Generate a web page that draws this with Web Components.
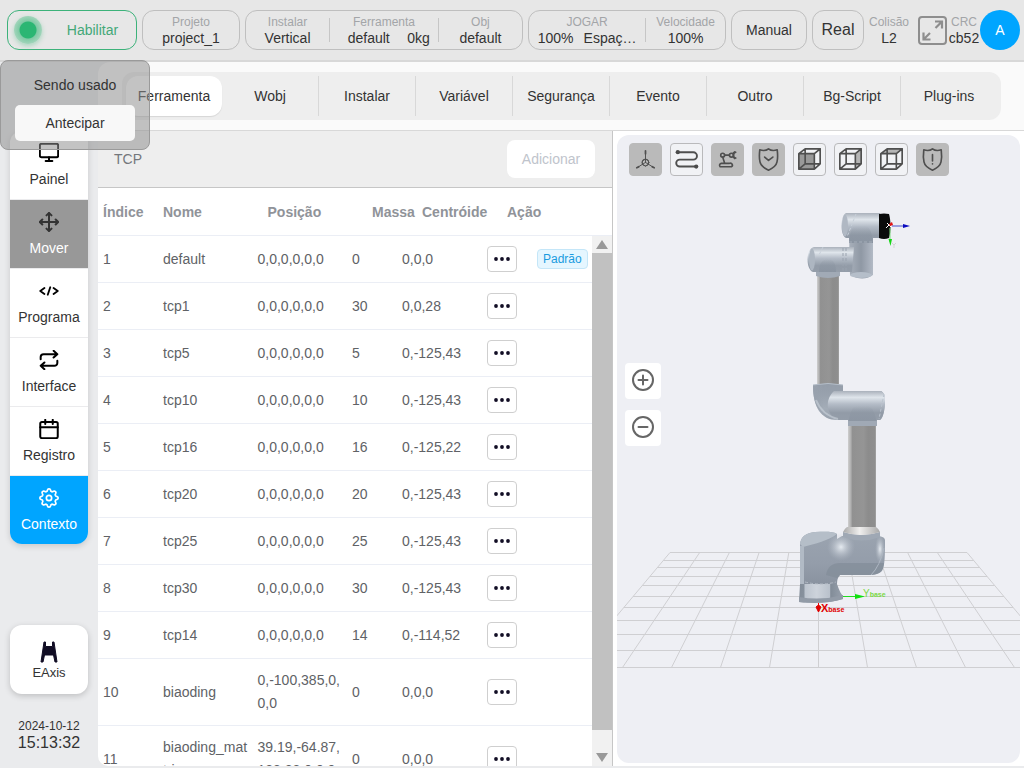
<!DOCTYPE html>
<html lang="pt">
<head>
<meta charset="utf-8">
<meta name="viewport" content="width=device-width, initial-scale=1">
<title>Contexto - Ferramenta</title>
<style>
  html, body { margin: 0; height: 100%; }
  body { font: 14px/16px "Liberation Sans", Arial, sans-serif; color: #333; background: #eaebed; }
</style>
</head>
<body>
<robot-app></robot-app>

<script>
const BASE = `*, *::before, *::after { box-sizing: border-box; }
button { font: inherit; color: inherit; margin: 0; padding: 0; border: 0; background: none; cursor: pointer; }
a { color: inherit; text-decoration: none; }
svg { display: block; }`;

function define(name, css, html) {
  customElements.define(name, class extends HTMLElement {
    constructor() {
      super();
      this.attachShadow({ mode: "open" });
    }
    connectedCallback() {
      if (this.shadowRoot.childNodes.length) return;
      const t = document.createElement("template");
      t.innerHTML = `<style>${BASE}${css}</style>${typeof html === "function" ? html(this) : html}`;
      this.shadowRoot.append(t.content.cloneNode(true));
    }
  });
}

const stroke = (body, w = 2, size = 24) =>
  `<svg width="${size}" height="${size}" viewBox="0 0 24 24" fill="none" stroke="currentColor" stroke-width="${w}" stroke-linecap="round" stroke-linejoin="round" aria-hidden="true">${body}</svg>`;

const CUBE = `<path d="M5 10h16v16H5zM11.500 5H27v15.500H11.500zM5 10l6.500-5M21 10l6-5M21 26l6-5.500M5 26l6.500-5.500"/>`;
const SHIELD = `<path d="M16 5c-2.500 2-6 2-9 1-.6 5-.6 9 .2 12.500C8 22.500 11.500 25 16 27c4.500-2 8-4.500 8.800-8.500.8-3.500.8-7.500.2-12.500-3 1-6.500 1-9-1z"/>`;
const view = (body) =>
  `<svg width="31" height="31" viewBox="0 0 32 32" fill="none" stroke="#4f4f4f" stroke-width="1.700" stroke-linecap="round" stroke-linejoin="round" aria-hidden="true">${body}</svg>`;

/* Eight-lobed gear outline around (12, 12). */
function gear() {
  const pts = [];
  for (let i = 0; i < 64; i++) {
    const a = i / 64 * 2 * Math.PI, r = 9.600 + 1.300 * Math.tanh(2.500 * Math.cos(8 * a));
    pts.push(`${(12 + r * Math.sin(a)).toFixed(2)} ${(12 - r * Math.cos(a)).toFixed(2)}`);
  }
  return `<path d="M${pts.join("L")}z"/>`;
}

const ICONS = {
  monitor: stroke(`<rect x="1" y="1" width="22" height="16" rx="2"/><path d="M12 17v4M8 21.500h8"/>`, 2.400, 20),
  move: stroke(`<path d="M4 9l-3 3 3 3M9 4l3-3 3 3M15 20l-3 3-3-3M20 9l3 3-3 3M1 12h22M12 1v22"/>`, 2.400, 20),
  code: stroke(`<path d="M6.500 8.500L1.500 12l5 3.500M17.500 8.500l5 3.500-5 3.500M13.500 7.500l-3 9"/>`, 2.200, 20),
  repeat: stroke(`<path d="M17.500 1l4.500 4-4.500 4M2 11V8.500A3.500 3.500 0 0 1 5.500 5H22M6.500 23L2 19l4.500-4M22 13v2.500a3.500 3.500 0 0 1-3.500 3.500H2"/>`, 2.400, 20),
  calendar: stroke(`<rect x="1.500" y="3.500" width="21" height="19.500" rx="2"/><path d="M7.500 1v5M16.500 1v5M1.500 10h21"/>`, 2.400, 20),
  gear: stroke(`<circle cx="12" cy="12" r="3.200"/>${gear()}`, 2, 20),
  axes: view(`<g stroke-width="1"><circle cx="16" cy="19" r="3.500"/><path d="M16 8v11M16 19l-8 5M16 19l8 5M13 17.500l3-2 3 2V21l-3 2-3-2z"/></g><path d="M16 7v3M7 24.500l2-1M25 24.500l-2-1" stroke-width="1.800"/>`),
  path: view(`<g stroke-width="2"><path d="M8 8.500h15a3.800 3.800 0 0 1 0 7.600H9a3.600 3.600 0 0 0 0 7.200h16"/></g><circle cx="7" cy="8.500" r="2.200" fill="#4a4a4a" stroke="none"/><circle cx="26" cy="23.300" r="2.200" fill="#4a4a4a" stroke="none"/>`),
  arm: view(`<g stroke-width="1.700"><path d="M9.500 20h8.500a2 2 0 0 1 2 3.500H8.500a2 2 0 0 1 1-3.500zM13 19.500L11 13.500M13 11.500h5"/><circle cx="11" cy="11.500" r="2"/><circle cx="20" cy="11.500" r="2"/><path d="M24.500 8.500c-3 .5-3 5.500 0 6M22 9.500l1.500-1.500M22 13.500l1.500 1.500"/></g>`),
  shieldCheck: view(SHIELD + `<path d="M12 13.500l4 3.500 4.500-3.500"/>`),
  shieldAlert: view(SHIELD + `<path d="M16 11v6.500M16 20.500v.1"/>`),
  cubeFront: view(`<path d="M5 10h16v16H5z" fill="#999" stroke="none"/>` + CUBE),
  cubeSide: view(`<path d="M21 10l6-5v15.500L21 26z" fill="#b5b5b5" stroke="none"/>` + CUBE),
  cubeTop: view(`<path d="M5 10l6.500-5H27l-6 5z" fill="#b5b5b5" stroke="none"/>` + CUBE)
};

define("stat-field", `
  :host { display: flex; flex-direction: column; align-items: center; justify-content: center; min-width: 0; white-space: nowrap; }
  .label { font-size: 12px; line-height: 15px; color: #a3a5a8; }
  .value { display: flex; align-self: stretch; justify-content: center; font-size: 14px; line-height: 16px; color: #333; }`,
  el => `<span class="label">${el.getAttribute("label")}</span><span class="value"><slot></slot></span>`);

define("app-header", `
  :host { display: flex; align-items: center; gap: 5px; height: 62px; padding: 0 4px 0 7px; background: #e7e7e7; border-bottom: 2px solid #d8d8d8; }
  .box { height: 40px; border: 1px solid #bfbfbf; border-radius: 12px; display: flex; align-items: stretch; justify-content: center; }
  button.box { align-items: center; }
  .enable { flex: 1 0 130px; border-color: #3cb27a; color: #43a878; justify-content: flex-start; padding-left: 6px; }
  .enable span { flex: 1; text-align: center; padding-left: 7px; }
  .lamp { width: 28px; height: 28px; border-radius: 50%; background: radial-gradient(circle, #2bb673 0 8px, #7fcaa5 9px, #a2d5bb 14px); box-shadow: 0 2px 5px #a9d6bf; }
  .project { flex: 1 0 98px; }
  .setup { flex: 2 0 278px; }
  .jog { flex: 1 0 198px; }
  .manual { flex: 0 0 76px; }
  .real { flex: 0 0 52px; font-size: 16px; }
  stat-field { flex: 1 1 84px; }
  .setup .tool { flex: 1 1 109px; }
  .jog .mode { flex: 1 1 118px; }
  .jog .speed { flex: 1 1 80px; }
  .rule { width: 1px; height: 24px; margin: 7px 0; background: #c6c6c6; }
  .half { flex: 1; text-align: center; }
  .load { padding-right: 8px; }
  .pair { display: flex; gap: 10px; }
  .tail { display: flex; align-items: center; }
  .tail stat-field { flex: 0 0 32px; }
  .collision { flex: 0 0 40px; }
  .full { width: 34px; height: 40px; display: grid; place-items: center; padding-left: 2px; }
  .user { width: 40px; height: 40px; border-radius: 50%; background: #00a5ff; color: #fff; font-size: 14px; }`,
  `<button class="box enable" type="button"><i class="lamp"></i><span>Habilitar</span></button>
   <div class="box project"><stat-field label="Projeto">project_1</stat-field></div>
   <div class="box setup">
     <stat-field label="Instalar">Vertical</stat-field><i class="rule"></i>
     <stat-field class="tool" label="Ferramenta"><span class="half">default</span><span class="load">0kg</span></stat-field><i class="rule"></i>
     <stat-field label="Obj">default</stat-field>
   </div>
   <div class="box jog">
     <stat-field class="mode" label="JOGAR"><span class="pair"><span>100%</span><span>Espaç…</span></span></stat-field><i class="rule"></i>
     <stat-field class="speed" label="Velocidade">100%</stat-field>
   </div>
   <button class="box manual" type="button">Manual</button>
   <button class="box real" type="button">Real</button>
   <stat-field class="collision" label="Colisão">L2</stat-field>
   <div class="tail">
     <button class="full" type="button" aria-label="Tela cheia"><svg width="29" height="29" viewBox="0 0 29 29" fill="none" stroke="#8e8e8e" stroke-width="2"><rect x="1" y="1" width="27" height="27" rx="3"/><path d="M17 5.500h7v7M24 5.500l-6.500 6.500M5.500 16.500v7h7M5.500 23.500l6.500-6.500" stroke-width="2.200"/></svg></button>
     <stat-field label="CRC">cb52</stat-field>
     <button class="user" type="button">A</button>
   </div>`);

define("nav-item", `
  :host { display: block; border-bottom: 1px solid #ebebed; }
  :host(:last-of-type) { border-bottom: 0; }
  a { display: flex; flex-direction: column; align-items: center; gap: 8px; height: 68px; padding-top: 12px; background: #fff; color: #000; }
  span { line-height: 16px; color: #333; }
  :host([state="used"]) a { background: #989898; color: #333; }
  :host([state="used"]) span { color: #fff; }
  :host([state="active"]) a { background: #00a5ff; color: #fff; }
  :host([state="active"]) span { color: #fff; }`,
  el => `<a href="#">${ICONS[el.getAttribute("icon")]}<span><slot></slot></span></a>`);

define("side-bar", `
  :host { display: flex; flex-direction: column; width: 98px; flex: none; padding: 69px 10px 16px; }
  nav { border-radius: 12px; overflow: hidden; box-shadow: 0 2px 6px #00000026; flex: none; }
  .axis { display: flex; flex-direction: column; align-items: center; justify-content: center; gap: 2px; height: 69px; margin-top: auto; padding-top: 2px; background: #fff; border-radius: 12px; box-shadow: 0 2px 6px #00000030; font-size: 13px; }
  time { display: flex; flex-direction: column; align-items: center; margin-top: 25px; font-size: 12px; line-height: 15px; }
  .clock { font-size: 16px; line-height: 18px; }`,
  `<nav>
     <nav-item icon="monitor">Painel</nav-item>
     <nav-item icon="move" state="used">Mover</nav-item>
     <nav-item icon="code">Programa</nav-item>
     <nav-item icon="repeat">Interface</nav-item>
     <nav-item icon="calendar">Registro</nav-item>
     <nav-item icon="gear" state="active">Contexto</nav-item>
   </nav>
   <button class="axis" type="button"><svg width="18" height="22" viewBox="0 0 18 22" aria-hidden="true"><path d="M4 1h1.500v4.500h7V1H14l3 20h-2l-1.500-7h-9L3 21H1z" fill="#110d24" stroke="#110d24" stroke-linejoin="round"/></svg><span>EAxis</span></button>
   <time datetime="2024-10-12T15:13:32"><span>2024-10-12</span><span class="clock">15:13:32</span></time>`);

define("tab-bar", `
  :host { display: block; padding: 10px 23px 10px 24px; background: #fafafa; border-bottom: 1px solid #d8d8d8; border-radius: 12px 0 0 0; }
  div { display: flex; height: 48px; padding: 4px; background: #eee; border-radius: 12px; }
  button { flex: 1 1 0; border-right: 1px solid #d8d8d8; }
  button:last-child { border-right: 0; }
  button[aria-selected="true"] { background: #fff; border-right: 0; border-radius: 12px; box-shadow: 0 1px 1px #0000001a; }`,
  `<div role="tablist">${["Ferramenta", "Wobj", "Instalar", "Variável", "Segurança", "Evento", "Outro", "Bg-Script", "Plug-ins"]
    .map((t, i) => `<button type="button" role="tab" aria-selected="${i === 0}">${t}</button>`).join("")}</div>`);

const TOOLS = [
  ["default", "0,0,0,0,0,0", 0, "0,0,0", true],
  ["tcp1", "0,0,0,0,0,0", 30, "0,0,28"],
  ["tcp5", "0,0,0,0,0,0", 5, "0,-125,43"],
  ["tcp10", "0,0,0,0,0,0", 10, "0,-125,43"],
  ["tcp16", "0,0,0,0,0,0", 16, "0,-125,22"],
  ["tcp20", "0,0,0,0,0,0", 20, "0,-125,43"],
  ["tcp25", "0,0,0,0,0,0", 25, "0,-125,43"],
  ["tcp30", "0,0,0,0,0,0", 30, "0,-125,43"],
  ["tcp14", "0,0,0,0,0,0", 14, "0,-114,52"],
  ["biaoding", "0,-100,385,0,<wbr>0,0", 0, "0,0,0"],
  ["biaoding_mat<wbr>trix", "39.19,-64.87,<wbr>123.23,0,0,0", 0, "0,0,0"]
];
const COLS = `<colgroup><col class="n"><col><col><col class="m"><col class="c"><col class="a"></colgroup>`;

define("tcp-table", `
  :host { display: flex; flex-direction: column; min-height: 0; flex: 1; background: #fff; color: #606266; }
  table { width: 100%; border-collapse: separate; border-spacing: 0; table-layout: fixed; line-height: 23px; }
  .n { width: 60px; } .m { width: 50px; } .c { width: 85px; } .a { width: 110px; }
  th, td { text-align: left; padding: 10px 5px; border-bottom: 1px solid #ebeef5; vertical-align: middle; overflow-wrap: anywhere; }
  th { height: 48px; padding: 2px 5px 0; color: #909399; font-weight: bold; white-space: nowrap; }
  .body { display: flex; flex: 1; min-height: 0; }
  .rows { flex: 1; min-width: 0; overflow-y: auto; scrollbar-width: none; }
  .rows::-webkit-scrollbar { display: none; }
  .cell { display: flex; align-items: center; gap: 20px; white-space: nowrap; }
  .more { width: 30px; height: 26px; flex: none; display: grid; place-items: center; border: 1px solid #cfcfcf; border-radius: 4px; background: #fff; }
  .tag { height: 20px; flex: none; padding: 0 5px; border: 1px solid #c4e6f8; border-radius: 4px; background: #e5f6ff; color: #1a9be0; font-size: 12px; line-height: 18px; }
  .bar { width: 20px; flex: none; display: flex; flex-direction: column; background: #f1f1f1; }
  .bar button { height: 17px; flex: none; display: grid; place-items: center; }
  .thumb { flex: 0 1 90%; background: #c1c1c1; margin-bottom: auto; }`,
  () => `<table>${COLS}<thead><tr><th>Índice</th><th>Nome</th><th>Posição</th><th>Massa</th><th>Centróide</th><th>Ação</th></tr></thead></table>
  <div class="body"><div class="rows"><table>${COLS}<tbody>${TOOLS.map(([name, pos, mass, center, std], i) =>
    `<tr><td>${i + 1}</td><td>${name}</td><td>${pos}</td><td>${mass}</td><td>${center}</td><td><div class="cell"><button class="more" type="button" aria-label="Mais"><svg width="16" height="4" viewBox="0 0 16 4" fill="#110d24"><circle cx="2" cy="2" r="1.900"/><circle cx="8" cy="2" r="1.900"/><circle cx="14" cy="2" r="1.900"/></svg></button>${std ? `<span class="tag">Padrão</span>` : ""}</div></td></tr>`).join("")}</tbody></table></div>
  <div class="bar"><button type="button" aria-label="Rolar para cima"><svg width="12" height="9" viewBox="0 0 12 9"><path d="M6 0l6 9H0z" fill="#999"/></svg></button><i class="thumb"></i><button type="button" aria-label="Rolar para baixo"><svg width="12" height="9" viewBox="0 0 12 9"><path d="M6 9l6-9H0z" fill="#999"/></svg></button></div></div>`);

define("tcp-panel", `
  :host { display: flex; flex-direction: column; min-width: 0; min-height: 0; border-right: 1px solid #c6c6c6; border-radius: 0 0 0 10px; overflow: hidden; }
  header { display: flex; align-items: center; justify-content: space-between; height: 57px; flex: none; padding: 0 17px 0 16px; background: #eee; border-bottom: 1px solid #c6c6c6; color: #74777c; }
  button { width: 88px; height: 38px; border-radius: 8px; background: #fff; color: #c0c4cc; }`,
  `<header><span>TCP</span><button type="button" disabled>Adicionar</button></header><tcp-table></tcp-table>`);

define("view-button", `
  :host { display: block; }
  button { width: 33px; height: 33px; display: grid; place-items: center; border: 1px solid #b9b9bb; border-radius: 4px; background: #f1f2f5; }
  :host([on]) button { background: #bababa; border-color: #bababa; }`,
  el => `<button type="button" aria-label="${el.getAttribute("label")}">${ICONS[el.getAttribute("icon")]}</button>`);

/* Floor grid in perspective: lines converge upward from y 667 to y 552. */
function floor() {
  const rows = [560, 567, 576, 585, 596, 607, 620, 634, 650];
  let d = "";
  [552, ...rows, 667].forEach(y => {
    const k = (y + .5 - 552.5) / 115, half = 148.500 + k * 96.500;
    d += `M${818.500 - half} ${y + .5}H${818.500 + half}`;
  });
  for (let i = -5; i <= 5; i++) d += `M${818.500 + i * 29.700} 552.500L${818.500 + i * 49} 667.500`;
  return d;
}

define("robot-scene", `
  :host { display: block; min-height: 0; min-width: 0; overflow: hidden; }
  svg { width: 100%; height: 100%; }
  text { font-family: "Liberation Sans", Arial, sans-serif; font-weight: bold; font-size: 11px; }
  .green { font-weight: normal; font-size: 10px; }
  .sub { font-size: 7px; font-weight: bold; }`,
  () => `<svg viewBox="617 135 403 628" preserveAspectRatio="xMidYMid slice" role="img" aria-label="Robô">
   <defs>
     <linearGradient id="h" x1="0" y1="0" x2="0" y2="1"><stop offset="0" stop-color="#aab1bb"/><stop offset=".22" stop-color="#dfe5eb"/><stop offset=".45" stop-color="#b4bcc7"/><stop offset=".75" stop-color="#929ba7"/><stop offset="1" stop-color="#949da9"/></linearGradient>
     <linearGradient id="v" x1="0" y1="0" x2="1" y2="0"><stop offset="0" stop-color="#a8b0bb"/><stop offset=".5" stop-color="#8f98a4"/><stop offset=".8" stop-color="#a4acb8"/><stop offset="1" stop-color="#b2bac5"/></linearGradient>
     <linearGradient id="t" x1="0" y1="0" x2="1" y2="0"><stop offset="0" stop-color="#cfcfcf"/><stop offset=".1" stop-color="#b0b0b0"/><stop offset=".16" stop-color="#919191"/><stop offset=".55" stop-color="#959595"/><stop offset=".72" stop-color="#8c8c8c"/><stop offset=".95" stop-color="#8e8e8e"/><stop offset="1" stop-color="#a5a5a5"/></linearGradient>
     <linearGradient id="r" x1="0" y1="0" x2="1" y2="0"><stop offset="0" stop-color="#aaa"/><stop offset=".45" stop-color="#f0efee"/><stop offset="1" stop-color="#a8a8a8"/></linearGradient>
     <linearGradient id="f" x1="0" y1="0" x2="1" y2="0"><stop offset="0" stop-color="#838d99"/><stop offset=".12" stop-color="#87919d"/><stop offset=".13" stop-color="#bcc4ce"/><stop offset=".4" stop-color="#cdd3db"/><stop offset=".7" stop-color="#b9c1cb"/><stop offset=".72" stop-color="#828c98"/><stop offset="1" stop-color="#98a1ad"/></linearGradient>
     <linearGradient id="e" x1="0" y1="0" x2="0" y2="1"><stop offset="0" stop-color="#949da9"/><stop offset=".25" stop-color="#98a1ad"/><stop offset=".6" stop-color="#a3acb7"/><stop offset="1" stop-color="#949da9"/></linearGradient>
     <linearGradient id="n" x1="0" y1="0" x2="0" y2="1"><stop offset="0" stop-color="#8a94a1" stop-opacity="0"/><stop offset="1" stop-color="#8a94a1"/></linearGradient>
     <linearGradient id="b" x1="0" y1="0" x2="0" y2="1"><stop offset="0" stop-color="#9ba4b0"/><stop offset=".6" stop-color="#949daa"/><stop offset="1" stop-color="#8a93a0"/></linearGradient>
     <linearGradient id="d" x1="0" y1="0" x2="1" y2="0"><stop offset="0" stop-color="#98a1ad"/><stop offset=".35" stop-color="#98a1ad" stop-opacity="0"/></linearGradient>
     <radialGradient id="s"><stop offset="0" stop-color="#eef3f8" stop-opacity=".9"/><stop offset="1" stop-color="#b4bcc7" stop-opacity="0"/></radialGradient>
   </defs>
   <path d="${floor()}" fill="none" stroke="#cfcfd2"/>
   <!-- forearm -->
   <path d="M817 274h22v112h-22z" fill="url(#t)"/>
   <path d="M816 268h24v8q-12 4-24 0z" fill="#a1aab6"/>
   <path d="M849 232h24v43q-10 7-23 0z" fill="url(#v)"/>
   <path d="M814 247h40l-2 25h-39c-7-2-8-23 1-25z" fill="url(#h)"/>
   <path d="M819 272c0-8 3-13 9-13s8 6 8 13z" fill="url(#n)"/>
   <ellipse cx="812" cy="259.500" rx="3" ry="11" fill="#adb6c1"/>
   <path d="M843 248v24M846 248v24" stroke="#9aa3af" stroke-dasharray="3 2" fill="none"/>
   <ellipse cx="861" cy="275" rx="11" ry="3" fill="#b5bec9"/>
   <!-- wrist -->
   <path d="M846 213h34v25h-7v5h-24v-5h-3c-6-3-6-22 0-25z" fill="url(#h)"/>
   <path d="M849 243q1-15 6-17h11q6 2 7 17z" fill="url(#n)"/>
   <ellipse cx="845" cy="225.500" rx="3" ry="11" fill="#b0b8c3"/>
   <path d="M856 214l-9 23M823 247l-4 8" stroke="#c6ced8" stroke-dasharray="3 2" fill="none"/>
   <path d="M849 242h24" stroke="#a3acb8" stroke-dasharray="3 2"/>
   <path d="M879 214q5-1 10 0c2 7 2 18 0 24q-5 2-10 0z" fill="#0b0b0b"/>
   <path d="M892 226h12" stroke="#4450c8"/><path d="M903 224l7 2-7 2z" fill="#0b0bbf"/>
   <path d="M890 228v14" stroke="#7edc7e"/><path d="M888.500 239h3.500l-1.500 7z" fill="#16d616"/>
   <path d="M887 223l4 4M891 223l-5 5" stroke="#fff"/><path d="M889 224l3-2 1 3-3 1z" fill="#e11212"/>
   <path d="M892 243l2 2 2-2M894 245v3" stroke="#d4d4d6" fill="none"/>
   <!-- elbow -->
   <path d="M813 385q15-3 30 0v6h38q4 2 4 9c0 10-2 18-5 20h-3v5h-29v-5h-11c-16 0-24-13-24-35z" fill="url(#e)"/>
   <path d="M834 391h47q4 2 4 9c0 10-2 18-5 20h-40c-14-3-16-20-6-29z" fill="url(#h)"/>
   <path d="M813 386h30v6c-8 4-10 14-2 28h-4c-16 0-24-13-24-34z" fill="url(#d)"/>
   <path d="M816 400q6 15 22 19" stroke="#d3dbe3" stroke-width="2" fill="none" opacity=".5"/>
   <path d="M848 425q2-17 8-19h12q7 2 9 19z" fill="url(#n)"/>
   <path d="M884 394l-5 25" stroke="#bac3cd" stroke-dasharray="3 2"/>
   <path d="M813 385q15-3 30 0" stroke="#b5bec9" fill="none"/>
   <!-- upper arm -->
   <path d="M848 426h28v103h-28z" fill="url(#t)"/>
   <path d="M848 421h29v5h-29z" fill="#a0a9b5"/>
   <!-- shoulder -->
   <path d="M800 544c1-8 6-11 15-12 9 0 17-1 22 2v5l5-3h37q6 1 6 4c0 14 0 26-3 31-4 4-9 4-16 4h-26q-3 3-3 9h-37z" fill="url(#b)"/>
   <path d="M800 544c1-8 6-11 15-12 9 0 17-1 22 2-8 6-22 10-34 13z" fill="#b5bec8"/>
   <path d="M800 546h4v40h-4z" fill="#b1bac5"/>
   <path d="M826 575q2-12 14-12h44c-1 9-4 12-18 12h-26l-3 3z" fill="#838d99" opacity=".75"/>
   <circle cx="841" cy="547" r="14" fill="url(#s)"/>
   <ellipse cx="880" cy="549" rx="5" ry="14" fill="url(#s)"/>
   <path d="M884 548q-4 18-13 27" stroke="#adb6c2" fill="none"/>
   <path d="M843 532q18 6 37 0v5q-18 7-37 0z" fill="#9fa8b4"/>
   <path d="M847 527h29q3 2 4 5-18 6-37 0 2-4 4-5z" fill="url(#r)"/>
   <!-- foot -->
   <path d="M800 584h37q3 9 6 12v3q-20 6-44 3z" fill="url(#f)"/>
   <path d="M799 597q22 4 44-2v4q-20 6-44 3z" fill="#929ba7"/>
   <path d="M805 582q16 4 31 0" stroke="#b2bac4" stroke-dasharray="3 2" fill="none"/>
   <path d="M843 596.500h13" stroke="#21dc21"/><path d="M855 594l10 2.500-10 2.500z" fill="#10e010"/>
   <text class="green" x="863" y="597" fill="#7bd846">Y<tspan class="sub">base</tspan></text>
   <path d="M818.500 603v8" stroke="#e00"/><path d="M816 607l2.500-2 2.500 2-2.500 5z" fill="#e00000" stroke="#e00000"/>
   <text x="821" y="612" fill="#e00000">X<tspan class="sub">base</tspan></text>
  </svg>`);

define("robot-view", `
  :host { display: grid; min-width: 0; min-height: 0; padding: 4px 4px 3px; background: #fff; }
  section { display: grid; grid-template: minmax(0, 1fr) / minmax(0, 1fr); min-height: 0; background: #eeeff4; border-radius: 12px; overflow: hidden; position: relative; }
  .tools { position: absolute; top: 8px; left: 12px; display: flex; gap: 8px; }
  .zoom { position: absolute; left: 8px; top: 0; bottom: 0; display: flex; flex-direction: column; justify-content: center; gap: 11px; padding-bottom: 89px; }
  .zoom button { width: 36px; height: 36px; display: grid; place-items: center; background: #fff; border-radius: 4px; color: #666; }`,
  `<section>
    <robot-scene></robot-scene>
    <div class="tools">
      <view-button on icon="axes" label="Eixos"></view-button>
      <view-button icon="path" label="Trajetória"></view-button>
      <view-button on icon="arm" label="Robô"></view-button>
      <view-button on icon="shieldCheck" label="Segurança"></view-button>
      <view-button icon="cubeFront" label="Frente"></view-button>
      <view-button icon="cubeSide" label="Lado"></view-button>
      <view-button icon="cubeTop" label="Topo"></view-button>
      <view-button on icon="shieldAlert" label="Alerta"></view-button>
    </div>
    <div class="zoom">
      <button type="button" aria-label="Aproximar">${stroke(`<circle cx="12" cy="11" r="10"/><path d="M12 6.500v9M7.500 11h9"/>`, 2)}</button>
      <button type="button" aria-label="Afastar">${stroke(`<circle cx="12" cy="11" r="10"/><path d="M7.500 11h9"/>`, 2)}</button>
    </div>
  </section>`);

define("control-notice", `
  :host { position: absolute; left: 0; top: 60px; width: 150px; height: 90px; display: flex; flex-direction: column; align-items: center; gap: 12px; padding-top: 16px; background: #8f8f8f88; border: 1px solid #9a9a9a; border-radius: 8px; box-sizing: border-box; }
  button { width: 120px; height: 36px; background: #f8f8f8; border-radius: 5px; }`,
  `<span>Sendo usado</span><button type="button">Antecipar</button>`);

define("robot-app", `
  :host { display: flex; flex-direction: column; height: 100vh; min-height: 640px; overflow: hidden; position: relative; }
  .body { display: flex; flex: 1; min-height: 0; }
  main { flex: 1; min-width: 0; display: flex; flex-direction: column; padding-bottom: 2px; }
  .split { display: grid; grid-template: minmax(0, 1fr) / 515fr 411fr; flex: 1; min-height: 0; }`,
  `<app-header></app-header>
   <div class="body">
     <side-bar></side-bar>
     <main><tab-bar></tab-bar><div class="split"><tcp-panel></tcp-panel><robot-view></robot-view></div></main>
   </div>
   <control-notice></control-notice>`);
</script>
</body>
</html>
